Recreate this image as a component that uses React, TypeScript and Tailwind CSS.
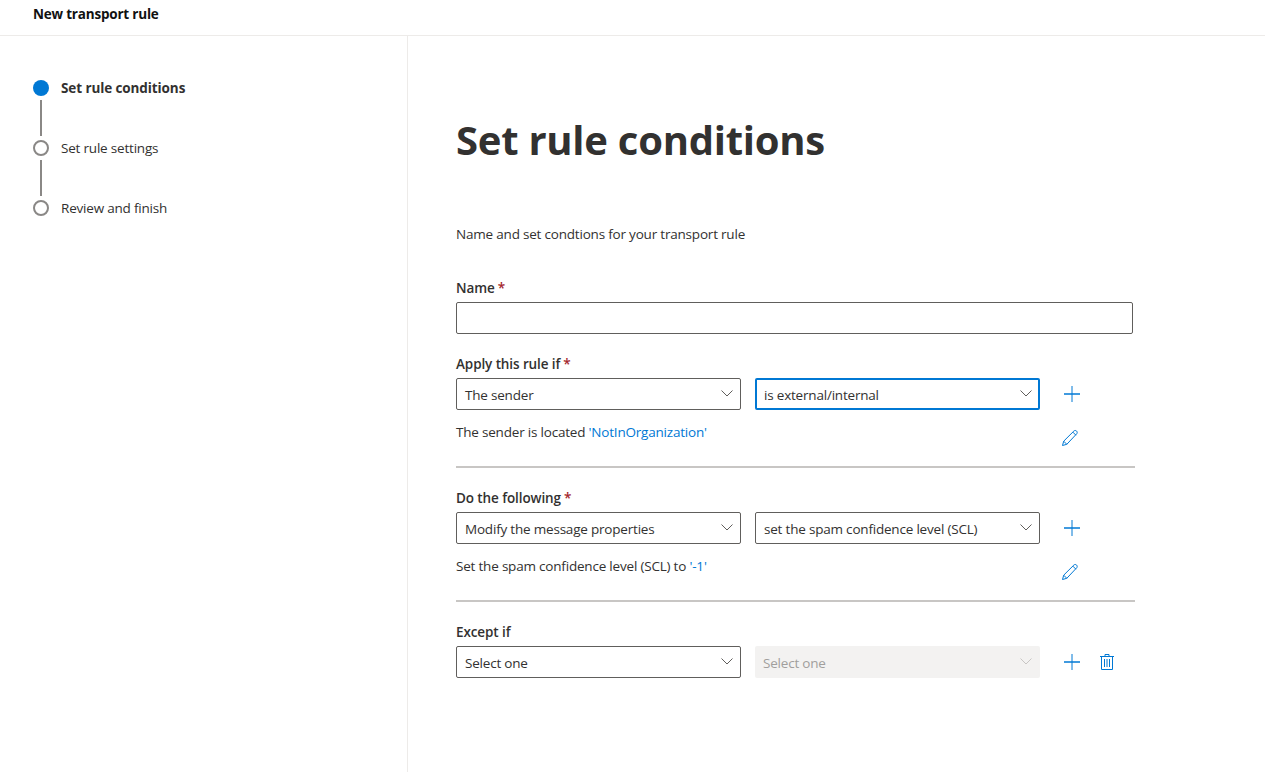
function Chevron({ className, muted }: { className: string; muted?: boolean }) {
  return (
    <svg width="12" height="7" viewBox="0 0 12 7" fill="none" className={`absolute ${className}`}>
      <path d="M0.5 0.5L6 6l5.5-5.5" stroke={muted ? '#c8c6c4' : '#605e5c'} strokeWidth="1" />
    </svg>
  );
}

function Select({ value, focused, disabled }: { value: string; focused?: boolean; disabled?: boolean }) {
  let cls = 'border border-[#605e5c] text-[#323130]';
  let chevron = 'right-[7px] top-[11px]';
  if (focused) {
    cls = 'border-2 border-[#0078d4] text-[#323130] pl-[7px]';
    chevron = 'right-[6px] top-[10px]';
  }
  if (disabled) {
    cls = 'bg-[#f3f2f1] text-[#a19f9d]';
    chevron = 'right-[8px] top-[12px]';
  }
  return (
    <div className={`relative w-[285px] h-8 rounded-[2px] pl-2 pt-0.5 flex items-center text-[13.5px] ${cls}`}>
      {value}
      <Chevron className={chevron} muted={disabled} />
    </div>
  );
}

function Plus() {
  return (
    <svg width="16" height="16" viewBox="0 0 16 16" className="block">
      <path d="M8 0v16" stroke="#0078d4" strokeWidth="1" />
      <path d="M0 8h16" stroke="#0078d4" strokeOpacity="0.75" strokeWidth="2" />
    </svg>
  );
}

function Pencil() {
  return (
    <svg width="18" height="18" viewBox="0 0 18 18" fill="none" className="block">
      <path d="M1.5 16.5l1.2-4.3L12.8 2.1c.8-.8 2-.8 2.8 0 .8.8.8 2 0 2.8L5.8 15.3l-4.3 1.2z" stroke="#0078d4" strokeWidth="1" />
      <path d="M2.7 12.2l3.1 3.1M11.8 3.1l3.1 3.1" stroke="#0078d4" strokeWidth="1" />
    </svg>
  );
}

function Trash() {
  return (
    <svg width="14" height="16" viewBox="0 0 14 16" fill="none" className="block">
      <path d="M0 2.5h14M5 2.5V.5h4v2M1.5 2.5v13h11v-13M4.5 5v8M7 5v8M9.5 5v8" stroke="#0078d4" strokeWidth="1" />
    </svg>
  );
}

function Label({ text, required }: { text: string; required?: boolean }) {
  return (
    <div className="h-5 leading-5 text-[13.5px] font-semibold text-[#323130] tracking-[-0.1px]">
      {text}
      {required && <span className="text-[#a4262c] ml-[3px]">*</span>}
    </div>
  );
}

function RuleRow({ first, second, focused, summary, link }: { first: string; second: string; focused?: boolean; summary: string; link: string }) {
  return (
    <div className="w-[679px] border-b-2 border-[#c8c6c4] h-[90px]">
      <div className="flex items-center gap-[14px]">
        <Select value={first} />
        <Select value={second} focused={focused} />
        <div className="ml-[10px]"><Plus /></div>
      </div>
      <div className="flex mt-3 text-[13.5px] text-[#323130] h-5 leading-5">
        <div className="w-[605px]">
          {summary} <span className="text-[#0078d4]">{link}</span>
        </div>
        <div className="pt-[7px]"><Pencil /></div>
      </div>
    </div>
  );
}

export default function App() {
  return (
    <div className="h-[772px] w-[1265px] overflow-hidden bg-white font-['Open_Sans',sans-serif] tracking-[-0.2px]">
      <header className="h-9 border-b border-[#edebe9] pl-[33px] pt-[4px] text-[13.5px] leading-5 font-bold text-[#111]">
        New transport rule
      </header>
      <div className="flex h-[736px]">
        <aside className="w-[408px] border-r border-[#edebe9] pl-[33px] pt-11">
          <div className="flex items-center gap-3 h-4">
            <div className="w-4 h-4 rounded-full bg-[#0078d4]" />
            <span className="text-[13.5px] font-bold text-[#323130] tracking-[-0.1px]">Set rule conditions</span>
          </div>
          <div className="w-0.5 h-9 bg-[#8a8886] ml-[7px] my-1" />
          <div className="flex items-center gap-3 h-4">
            <div className="w-4 h-4 rounded-full border-2 border-[#8a8886]" />
            <span className="text-[13.5px] text-[#323130]">Set rule settings</span>
          </div>
          <div className="w-0.5 h-9 bg-[#8a8886] ml-[7px] my-1" />
          <div className="flex items-center gap-3 h-4">
            <div className="w-4 h-4 rounded-full border-2 border-[#8a8886]" />
            <span className="text-[13.5px] text-[#323130]">Review and finish</span>
          </div>
        </aside>
        <main className="pl-12 pt-[74px]">
          <h1 className="text-[40px] leading-[60px] font-bold text-[#323130] tracking-[-0.25px]">Set rule conditions</h1>
          <p className="mt-[54px] text-[13.5px] leading-5 text-[#323130]">Name and set condtions for your transport rule</p>
          <div className="mt-[34px]"><Label text="Name" required /></div>
          <div className="mt-1 w-[677px] h-8 border border-[#605e5c] rounded-[2px]" />
          <div className="mt-5"><Label text="Apply this rule if" required /></div>
          <div className="mt-1"><RuleRow first="The sender" second="is external/internal" focused summary="The sender is located" link="'NotInOrganization'" /></div>
          <div className="mt-5"><Label text="Do the following" required /></div>
          <div className="mt-1"><RuleRow first="Modify the message properties" second="set the spam confidence level (SCL)" summary="Set the spam confidence level (SCL) to" link="'-1'" /></div>
          <div className="mt-5"><Label text="Except if" /></div>
          <div className="mt-1 flex items-center gap-[14px]">
            <Select value="Select one" />
            <Select value="Select one" disabled />
            <div className="ml-[10px]"><Plus /></div>
            <div className="ml-[6px]"><Trash /></div>
          </div>
        </main>
      </div>
    </div>
  );
}
